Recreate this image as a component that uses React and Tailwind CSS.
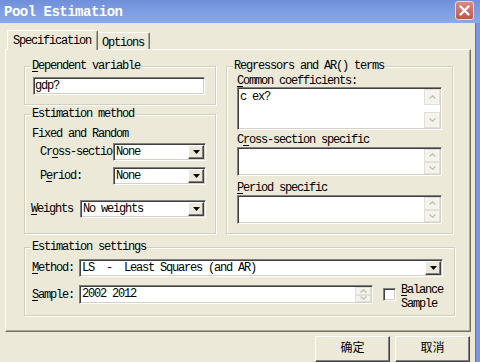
import React from 'react';

const sunken =
  'border border-t-[#808080] border-l-[#808080] border-b-white border-r-white shadow-[inset_1px_1px_0_#404040,inset_-1px_-1px_0_#d4d0c8]';
const raised =
  'border border-t-white border-l-white border-b-[#404040] border-r-[#404040] shadow-[inset_-1px_-1px_0_#808080]';

function Key({ children }) {
  return <u className="underline underline-offset-[2px]">{children}</u>;
}

function Group({ label, className = '', children }) {
  return (
    <fieldset className={`border border-[#d0d0bf] shadow-[1px_1px_0_#fff,inset_1px_1px_0_#fff] ${className}`}>
      <legend className="ml-[6px] px-[1px] bg-[#ece9d8] leading-[12px]">{label}</legend>
      {children}
    </fieldset>
  );
}

function Select({ value, className = '' }) {
  return (
    <div className={`flex h-[18px] bg-white p-[1px] ${sunken} ${className}`}>
      <span className="flex-1 pl-[1px] leading-[14px] whitespace-pre overflow-hidden">{value}</span>
      <span className={`w-[16px] flex items-center justify-center bg-[#ece9d8] ${raised}`}>
        <svg width="7" height="4" viewBox="0 0 7 4">
          <path d="M0 0h7L3.5 4z" fill="#000" />
        </svg>
      </span>
    </div>
  );
}

function ScrollBtn({ up, className = '' }) {
  return (
    <div className={`flex items-center justify-center bg-[#f4f3ee] border border-[#e3e1d5] ${className}`}>
      <svg width="7" height="4" viewBox="0 0 7 4">
        <path
          d={up ? 'M0.5 3.5L3.5 0.8L6.5 3.5' : 'M0.5 0.5L3.5 3.2L6.5 0.5'}
          fill="none"
          stroke="#c4c1b0"
          strokeWidth="1.4"
        />
      </svg>
    </div>
  );
}

function TextBox({ text, className = '', tall }) {
  return (
    <div className={`flex w-[205px] bg-white p-[1px] ${sunken} ${className}`}>
      <div className="flex-1 pl-[1px] pt-[2px]">{text}</div>
      <div className="w-[16px] flex flex-col justify-between">
        <ScrollBtn up className={tall ? 'h-[16px]' : 'flex-1'} />
        <ScrollBtn className={tall ? 'h-[16px]' : 'flex-1'} />
      </div>
    </div>
  );
}

function CloseBtn() {
  return (
    <div className="self-start mt-[1px] w-[19px] h-[19px] rounded-[3px] border border-[#f2d6cf] bg-linear-to-b from-[#d98a82] to-[#bd5650] flex items-center justify-center">
      <svg width="13" height="13" viewBox="0 0 13 13">
        <path d="M2.5 2.5L10.5 10.5M10.5 2.5L2.5 10.5" stroke="#fff" strokeWidth="2.4" strokeLinecap="round" />
      </svg>
    </div>
  );
}

export default function App() {
  return (
    <div className="w-[480px] h-[362px] overflow-hidden flex flex-col bg-[#ece9d8] text-black text-[12px] leading-[12px] tracking-[-1.2px] font-['Liberation_Mono','Noto_Sans_CJK_SC',monospace]">
      {/* title bar */}
      <div className="h-[23px] shrink-0 flex items-center justify-between pl-[4px] pr-[6px] bg-linear-to-b from-[#6f8fda] to-[#8aaaee]">
        <span className="text-white font-bold text-[14px] leading-[16px] tracking-[-0.5px]">Pool Estimation</span>
        <CloseBtn />
      </div>

      <div className="flex flex-1 min-h-0">
        <div className="flex-1 flex flex-col">
          {/* tabs */}
          <div className="flex items-end pl-[7px] pt-[7px] relative z-10 -mb-[1px]">
            <div className="w-[91px] h-[20px] bg-[#ece9d8] border-t border-l border-white border-r border-r-[#716f64] shadow-[inset_-1px_0_0_#aca899] rounded-t-[2px] pl-[5px] pt-[4px]">
              Specification
            </div>
            <div className="w-[52px] h-[17px] mb-[1px] border-t border-white border-r border-r-[#716f64] shadow-[inset_-1px_0_0_#aca899] rounded-tr-[2px] pl-[4px] pt-[4px]">
              Options
            </div>
          </div>

          {/* panel */}
          <div className="ml-[5px] w-[466px] h-[284px] border border-t-white border-l-white border-r-[#716f64] border-b-[#716f64] shadow-[inset_-1px_-1px_0_#aca899] pl-[18px] pt-[10px]">
            <div className="flex gap-[10px]">
              <div className="w-[192px] flex flex-col gap-[3px]">
                <Group label={<><Key>D</Key>ependent variable</>} className="h-[45px]">
                  <div className="pl-[8px] pt-[5px]">
                    <div className={`w-[172px] h-[18px] bg-white p-[1px] leading-[14px] ${sunken}`}>gdp?</div>
                  </div>
                </Group>

                <Group label="Estimation method" className="h-[126px]">
                  <div className="pl-[7px] pt-[8px]">Fixed and Random</div>
                  <div className="flex items-center mt-[3px] pl-[15px]">
                    <span className="w-[73px] overflow-hidden whitespace-nowrap">
                      Cr<Key>o</Key>ss-sectio
                    </span>
                    <Select value="None" className="w-[93px]" />
                  </div>
                  <div className="flex items-center mt-[6px] pl-[15px]">
                    <span className="w-[73px]">
                      P<Key>e</Key>riod:
                    </span>
                    <Select value="None" className="w-[93px]" />
                  </div>
                  <div className="flex items-center mt-[15px] pl-[6px]">
                    <span className="w-[49px]">
                      <Key>W</Key>eights
                    </span>
                    <Select value="No weights" className="w-[126px]" />
                  </div>
                </Group>
              </div>

              <Group label="Regressors and AR() terms" className="w-[227px] h-[174px]">
                <div className="pl-[10px] pt-[3px]">
                  <div>
                    <Key>C</Key>ommon coefficients:
                  </div>
                  <TextBox text="c ex?" tall className="h-[43px]" />
                  <div className="mt-[4px]">
                    C<Key>r</Key>oss-section specific
                  </div>
                  <TextBox className="h-[29px] mt-[1px]" />
                  <div className="mt-[6px]">
                    <Key>P</Key>eriod specific
                  </div>
                  <TextBox className="h-[29px] mt-[1px]" />
                </div>
              </Group>
            </div>

            <Group label="Estimation settings" className="mt-[7px] w-[431px] h-[75px]">
              <div className="flex items-center pl-[7px] mt-[6px]">
                <span className="w-[47px]">
                  <Key>M</Key>ethod:
                </span>
                <Select value="LS  -  Least Squares (and AR)" className="w-[364px]" />
              </div>
              <div className="flex items-center h-[19px] pl-[7px] mt-[8px]">
                <span className="w-[47px]">
                  <Key>S</Key>ample:
                </span>
                <div className={`flex w-[294px] h-[19px] bg-white p-[1px] ${sunken}`}>
                  <span className="flex-1 pl-[1px] leading-[15px]">2002 2012</span>
                  <div className="w-[16px] flex flex-col">
                    <ScrollBtn up className="flex-1" />
                    <ScrollBtn className="flex-1" />
                  </div>
                </div>
                <div className={`ml-[10px] w-[13px] h-[13px] bg-white ${sunken}`} />
                <div className="ml-[5px] mt-[4px] flex flex-col leading-[14px]">
                  <span>
                    <Key>B</Key>alance
                  </span>
                  <span>Sample</span>
                </div>
              </div>
            </Group>
          </div>

          {/* buttons */}
          <div className="flex justify-end gap-[5px] pr-[5px] mt-[4px]">
            {['确定', '取消'].map(t => (
              <div
                key={t}
                className={`w-[75px] h-[26px] shrink-0 bg-[#ece9d8] text-center pt-[2px] leading-[16px] tracking-normal font-['Noto_Sans_CJK_SC',sans-serif] ${raised}`}
              >
                {t}
              </div>
            ))}
          </div>
        </div>
        <div className="w-[5px] shrink-0 bg-[#7896e2] border-l border-[#5676cc]" />
      </div>
    </div>
  );
}
